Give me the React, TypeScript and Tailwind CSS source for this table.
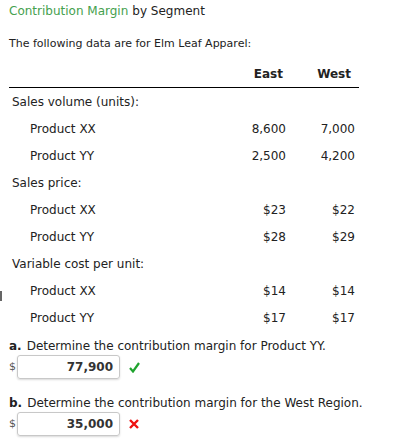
import { FC } from "react";

type Row = { label: string; indent?: boolean; east?: string; west?: string };

const rows: Row[] = [
  { label: "Sales volume (units):" },
  { label: "Product XX", indent: true, east: "8,600", west: "7,000" },
  { label: "Product YY", indent: true, east: "2,500", west: "4,200" },
  { label: "Sales price:" },
  { label: "Product XX", indent: true, east: "$23", west: "$22" },
  { label: "Product YY", indent: true, east: "$28", west: "$29" },
  { label: "Variable cost per unit:" },
  { label: "Product XX", indent: true, east: "$14", west: "$14" },
  { label: "Product YY", indent: true, east: "$17", west: "$17" },
];

const AnswerBox: FC<{ value: string; correct: boolean }> = ({ value, correct }) => (
  <div className="flex items-center h-[24px]">
    <span className="w-[8px] text-[11px] text-[#555]">$</span>
    <div className="w-[103px] h-[24px] border border-[#c8c8c8] rounded-[3px] shadow-[0_1px_2px_rgba(0,0,0,0.15)] flex items-center justify-end pr-[6px] font-bold text-[#333]">
      {value}
    </div>
    {correct ? (
      <svg className="ml-[9px]" width="11" height="11" viewBox="0 0 11 11">
        <path d="M1 6 L4 9.5 L10 1" fill="none" stroke="#1fa32e" strokeWidth="2.2" />
      </svg>
    ) : (
      <svg className="ml-[9px]" width="10" height="10" viewBox="0 0 10 10">
        <path d="M1 1 L9 9 M9 1 L1 9" fill="none" stroke="#ee1111" strokeWidth="2.4" />
      </svg>
    )}
  </div>
);

const App: FC = () => {
  return (
    <div className="relative w-[408px] h-[442px] bg-white text-[12px] text-[#222] font-['DejaVu_Sans',Verdana,sans-serif] px-[9px]">
      {/* stray edge mark */}
      <div className="absolute left-0 top-[291px] w-[2px] h-[10px] bg-[#666]" />

      <div className="h-[22px] flex items-center">
        <span className="text-[#45a14e]">Contribution Margin</span>
        <span className="ml-[4px]">by Segment</span>
      </div>

      <div className="h-[22px] mt-[11px] flex items-center text-[11px]">
        The following data are for Elm Leaf Apparel:
      </div>

      <div className="w-[350px] mt-[6px]">
        <div className="grid grid-cols-[207px_70px_69px] h-[27px] items-center border-b border-black font-bold">
          <span />
          <span className="text-right pr-[3px]">East</span>
          <span className="text-right pr-[4px]">West</span>
        </div>
        {rows.map((r, i) => (
          <div key={i} className="grid grid-cols-[207px_70px_69px] h-[27px] items-center">
            <span className={r.indent ? "pl-[21px]" : "pl-[3px]"}>{r.label}</span>
            <span className="text-right">{r.east}</span>
            <span className="text-right">{r.west}</span>
          </div>
        ))}
      </div>

      <div className="mt-[6px] flex flex-col">
        <div className="h-[18px] flex items-center">
          <span className="font-bold mr-[5px]">a.</span>
          Determine the contribution margin for Product YY.
        </div>
        <AnswerBox value="77,900" correct />
        <div className="h-[18px] mt-[15px] flex items-center">
          <span className="font-bold mr-[5px]">b.</span>
          Determine the contribution margin for the West Region.
        </div>
        <AnswerBox value="35,000" correct={false} />
      </div>
    </div>
  );
};

export default App;
